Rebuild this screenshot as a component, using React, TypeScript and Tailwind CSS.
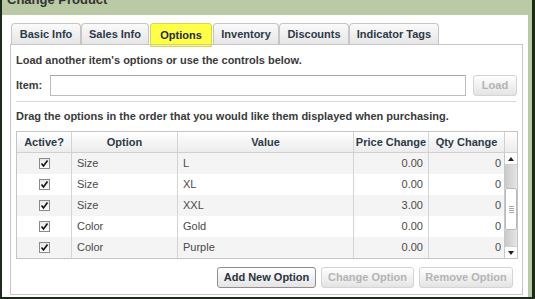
import React from "react"

const tabs = ["Basic Info", "Sales Info", "Options", "Inventory", "Discounts", "Indicator Tags"]
const tabWidths = ["w-[70px]", "w-[68px]", "w-[62px]", "w-[66px]", "w-[70px]", "w-[90px]"]

const rows = [
  { option: "Size", value: "L", price: "0.00", qty: "0" },
  { option: "Size", value: "XL", price: "0.00", qty: "0" },
  { option: "Size", value: "XXL", price: "3.00", qty: "0" },
  { option: "Color", value: "Gold", price: "0.00", qty: "0" },
  { option: "Color", value: "Purple", price: "0.00", qty: "0" },
]

const Check = () => (
  <div className="w-[11px] h-[11px] border border-[#8a8a8a] bg-gradient-to-b from-[#e8e8e8] to-white flex items-center justify-center">
    <svg width="9" height="9" viewBox="0 0 9 9">
      <path d="M1.5 4.5 L3.5 7 L7.5 1.5" fill="none" stroke="#111" strokeWidth="1.6" />
    </svg>
  </div>
)

const Scrollbar = () => (
  <div className="w-[13px] flex flex-col border-l border-[#c8c8c8] bg-[#f4f4f4]">
    <div className="h-[12px] flex items-center justify-center bg-white border-b border-[#d0d0d0]">
      <svg width="6" height="4" viewBox="0 0 6 4"><path d="M0 4 L3 0 L6 4 Z" fill="#222" /></svg>
    </div>
    <div className="h-[23px] bg-gradient-to-r from-[#c9c9c9] to-[#e6e6e6]" />
    <div className="h-[42px] bg-white border border-[#b8b8b8] rounded-[2px] flex flex-col items-center justify-center gap-[1px]">
      <div className="w-[5px] h-[1px] bg-[#aaa]" />
      <div className="w-[5px] h-[1px] bg-[#aaa]" />
      <div className="w-[5px] h-[1px] bg-[#aaa]" />
      <div className="w-[5px] h-[1px] bg-[#aaa]" />
    </div>
    <div className="flex-1 bg-gradient-to-r from-[#c9c9c9] to-[#e6e6e6]" />
    <div className="h-[12px] flex items-center justify-center bg-white border-t border-[#d0d0d0]">
      <svg width="6" height="4" viewBox="0 0 6 4"><path d="M0 0 L6 0 L3 4 Z" fill="#222" /></svg>
    </div>
  </div>
)

const Button = ({ label, disabled, w }: { label: string; disabled?: boolean; w: string }) => (
  <div
    className={`${w} h-[21px] rounded-[3px] border flex items-center justify-center font-bold text-[11px] whitespace-nowrap bg-gradient-to-b from-white to-[#e4e4e4] ${
      disabled ? "border-[#d4d4d4] text-[#b4b4b4]" : "border-[#8e8e8e] text-[#2a3440]"
    }`}
  >
    {label}
  </div>
)

export default function App() {
  return (
    <div className="w-[535px] h-[299px] overflow-hidden bg-[#b9caa5] border-l-2 border-r-[3px] border-b-2 border-[#1c2a1c] flex flex-col font-['Liberation_Sans',Arial,sans-serif]">
      <div className="h-[15px] shrink-0 px-[5px] flex items-end overflow-hidden">
        <div className="text-[13px] font-bold text-[#333] leading-none mb-[9px]">Change Product</div>
      </div>
      <div className="flex-1 bg-white mr-[4px] pl-[8px] pr-[5px] pt-[8px] flex flex-col">
        <div className="flex items-end h-[21px] pl-[1px]">
          {tabs.map((t, i) =>
            t === "Options" ? (
              <div key={t} className={`${tabWidths[i]} h-[24px] -mb-[3px] mx-[1px] bg-[#ffff47] border border-[#d8d850] rounded-t-[3px] flex items-center justify-center text-[11px] font-bold text-[#1e2a36]`}>
                {t}
              </div>
            ) : (
              <div key={t} className={`${tabWidths[i]} h-[21px] border border-b-0 border-[#c6c6c6] rounded-t-[4px] bg-gradient-to-b from-[#fafafa] to-[#e6e6e6] flex items-center justify-center text-[11px] font-bold text-[#2c3a48]`}>
                {t}
              </div>
            )
          )}
        </div>
        <div className="flex-1 border border-[#c6c6c6] mb-[2px] px-[5px] pt-[10px] flex flex-col">
          <div className="text-[11px] font-bold text-[#3a3a3a] leading-none">Load another item's options or use the controls below.</div>
          <div className="flex items-center mt-[9px] h-[21px]">
            <div className="w-[34px] text-[11px] font-bold text-[#3a3a3a]">Item:</div>
            <div className="w-[416px] h-[21px] border border-[#bdbdbd] border-t-[#a8a8a8] bg-white" />
            <div className="ml-[7px]">
              <Button label="Load" disabled w="w-[44px]" />
            </div>
          </div>
          <div className="h-[1px] bg-[#d8d8d8] mt-[5px] mr-[1px]" />
          <div className="text-[11px] font-bold text-[#3a3a3a] leading-none mt-[9px]">Drag the options in the order that you would like them displayed when purchasing.</div>
          <div className="mt-[9px] w-[502px] border border-[#c4c4c4] flex">
            <div className="flex-1 flex flex-col">
              <div className="flex h-[21px] bg-gradient-to-b from-white to-[#ececec] border-b border-[#d0d0d0] text-[11px] font-bold text-[#2c3a48]">
                <div className="w-[55px] flex items-center justify-center border-r border-[#d4d4d4]">Active?</div>
                <div className="w-[106px] flex items-center justify-center border-r border-[#d4d4d4]">Option</div>
                <div className="w-[176px] flex items-center justify-center border-r border-[#d4d4d4]">Value</div>
                <div className="w-[75px] flex items-center justify-center border-r border-[#d4d4d4]">Price Change</div>
                <div className="flex-1 flex items-center justify-center">Qty Change</div>
              </div>
              {rows.map((r, i) => (
                <div key={i} className={`flex h-[21px] text-[11px] text-[#4a4a4a] ${i % 2 === 0 ? "bg-[#f4f4f4]" : "bg-white"}`}>
                  <div className="w-[55px] flex items-center justify-center border-r border-[#d4d4d4]"><Check /></div>
                  <div className="w-[106px] flex items-center pl-[5px] border-r border-[#d4d4d4]">{r.option}</div>
                  <div className="w-[176px] flex items-center pl-[5px] border-r border-[#d4d4d4]">{r.value}</div>
                  <div className="w-[75px] flex items-center justify-end pr-[5px] border-r border-[#d4d4d4]">{r.price}</div>
                  <div className="flex-1 flex items-center justify-end pr-[3px]">{r.qty}</div>
                </div>
              ))}
            </div>
            <div className="flex flex-col">
              <div className="h-[21px] w-[13px] bg-gradient-to-b from-white to-[#ececec] border-b border-l border-[#d0d0d0]" />
              <div className="flex-1 flex"><Scrollbar /></div>
            </div>
          </div>
          <div className="flex justify-end gap-[5px] mt-[8px] mr-[4px]">
            <Button label="Add New Option" w="w-[99px]" />
            <Button label="Change Option" disabled w="w-[93px]" />
            <Button label="Remove Option" disabled w="w-[94px]" />
          </div>
        </div>
      </div>
    </div>
  )
}
